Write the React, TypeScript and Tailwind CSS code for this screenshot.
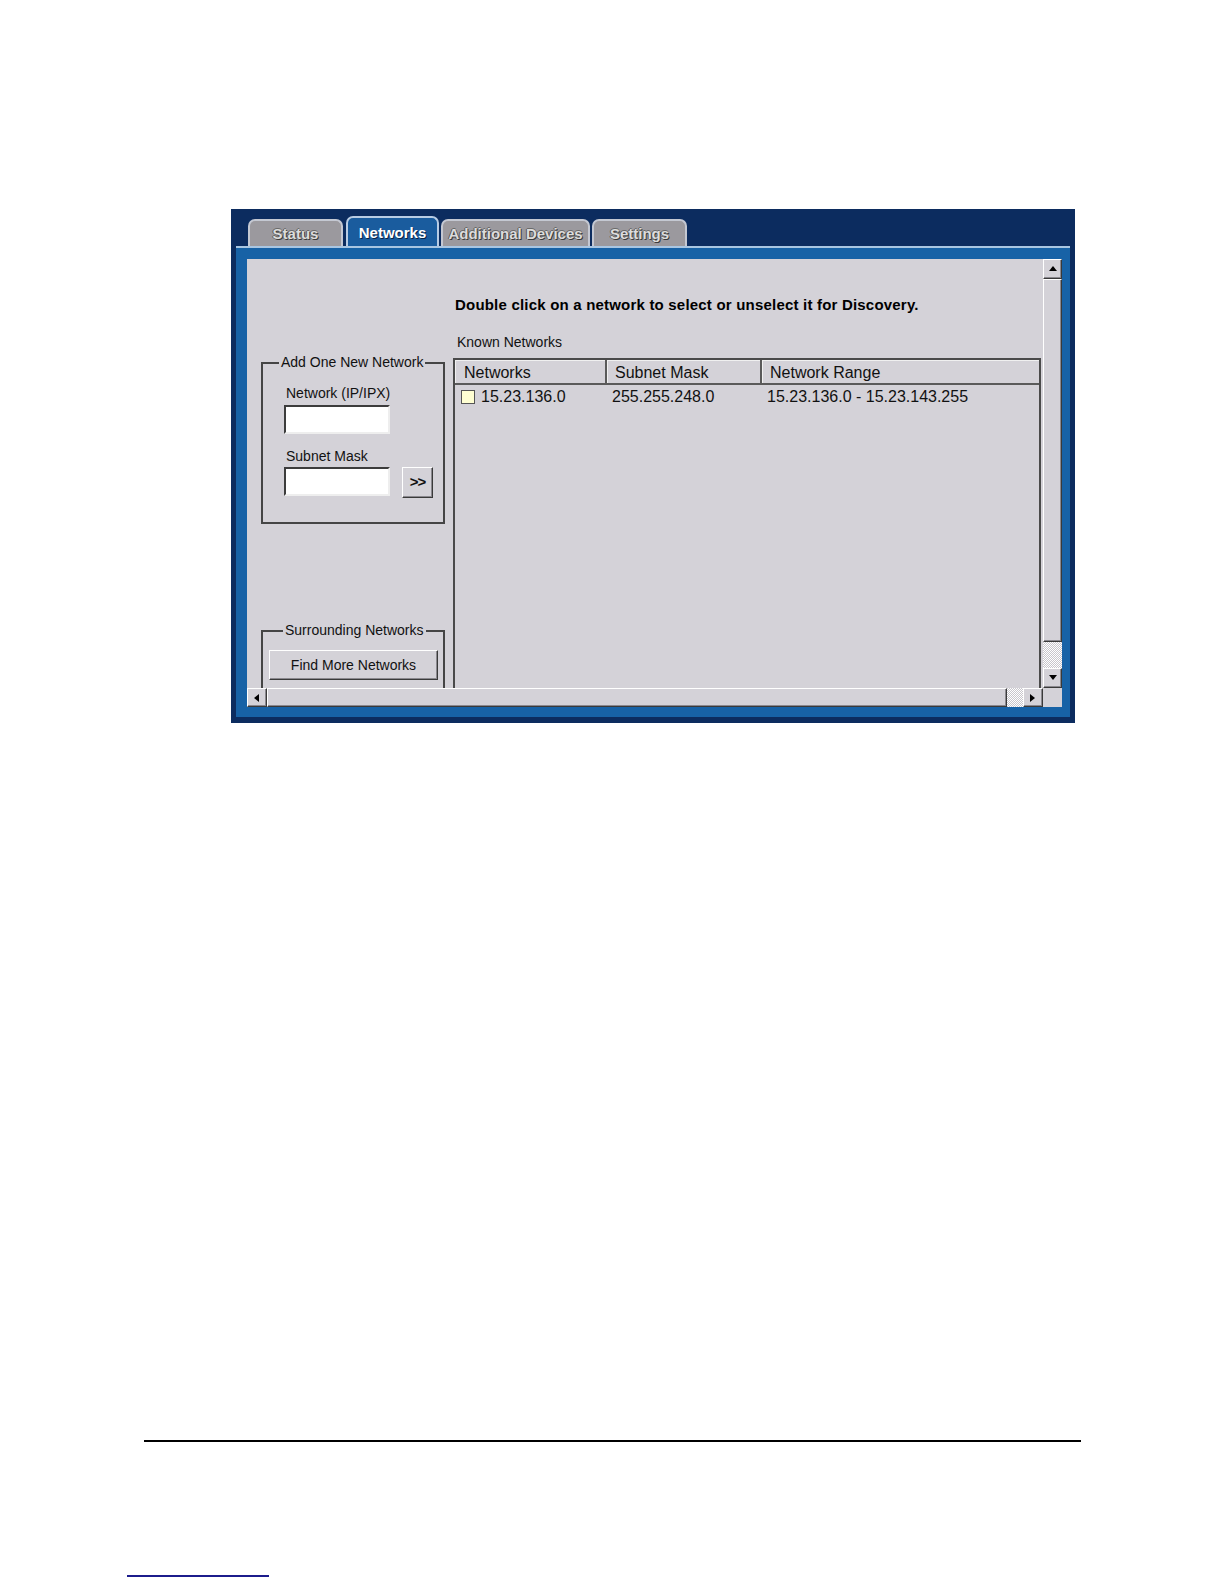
import React from "react";

const F = "font-['Liberation_Sans',Arial,sans-serif]";
const raised =
  "bg-[#d4d2d8] border border-t-white border-l-white border-b-[#3a3a3a] border-r-[#3a3a3a] shadow-[inset_-1px_-1px_0_#8a888e]";
const dither =
  "bg-[image:repeating-conic-gradient(#ffffff_0_25%,#c8c6cc_0_50%)] bg-[length:2px_2px]";

function Tri({ dir }: { dir: "up" | "down" | "left" | "right" }) {
  const pts = {
    up: "4,1 8,6 0,6",
    down: "0,1 8,1 4,6",
    left: "6,0 6,8 1,4",
    right: "1,0 1,8 6,4",
  }[dir];
  return (
    <svg width="8" height="8" viewBox="0 0 8 8">
      <polygon points={pts} fill="#000" />
    </svg>
  );
}

function Tab({ label, w, active, ml }: { label: string; w: string; active?: boolean; ml: string }) {
  if (active) {
    return (
      <div
        className={`${w} ${ml} h-[30px] pt-[2px] rounded-t-[7px] border-2 border-b-0 border-[#b8cce4] bg-[#1a5c9e] flex items-center justify-center text-[15px] font-bold text-white [text-shadow:1px_1px_0_#0a2244]`}
      >
        {label}
      </div>
    );
  }
  return (
    <div
      className={`${w} ${ml} h-[27px] pt-[2px] rounded-t-[7px] border-2 border-b-0 border-[#c4c8d2] bg-[#9b999e] flex items-center justify-center text-[15px] font-bold text-[#dcdcdc] [text-shadow:1px_1px_0_#3c3c3c,-1px_0_0_#5c5c5c,0_-1px_0_#6a6a6a]`}
    >
      {label}
    </div>
  );
}

export default function App() {
  return (
    <div className={`w-[1224px] h-[1584px] bg-white ${F} overflow-hidden`}>
      <div className="pt-[209px] pl-[231px]">
        {/* Frame */}
        <div className="w-[844px] h-[514px] bg-[#0c2c5f] flex flex-col">
          {/* tab strip */}
          <div className="h-[37px] flex items-end pl-[17px]">
            <Tab label="Status" w="w-[95px]" ml="ml-0" />
            <Tab label="Networks" w="w-[93px]" ml="ml-[3px]" active />
            <Tab label="Additional Devices" w="w-[149px]" ml="ml-[2px]" />
            <Tab label="Settings" w="w-[95px]" ml="ml-[2px]" />
          </div>
          {/* blue band */}
          <div className="mx-[5px] mb-[6px] flex-1 bg-[#1762a6] border-t-2 border-[#a9c6e2] pl-[11px] pr-[8px] pt-[11px] pb-[10px]">
            {/* gray content */}
            <div className="w-[815px] h-[448px] bg-[#d4d2d8] grid grid-cols-[796px_19px] grid-rows-[429px_19px] text-[#111]">
              {/* main */}
              <div className="overflow-hidden flex">
                {/* left column */}
                <div className="w-[206px] pl-[14px] pr-[8px] pt-[95px] flex flex-col">
                  <fieldset className="border-2 border-[#454545]">
                    <legend className="ml-[16px] px-[2px] text-[14px] leading-[17px] whitespace-nowrap">Add One New Network</legend>
                    <div className="pl-[21px] pb-[24px]">
                      <div className="mt-[14px] pl-[2px] text-[14px] leading-[17px]">Network (IP/IPX)</div>
                      <div className="mt-[3px] w-[106px] h-[29px] bg-white border-2 border-t-[#3c3c3c] border-l-[#3c3c3c] border-b-[#eeeeee] border-r-[#eeeeee]" />
                      <div className="mt-[14px] pl-[2px] text-[14px] leading-[17px]">Subnet Mask</div>
                      <div className="mt-[2px] flex items-start">
                        <div className="w-[106px] h-[29px] bg-white border-2 border-t-[#3c3c3c] border-l-[#3c3c3c] border-b-[#eeeeee] border-r-[#eeeeee]" />
                        <div className={`ml-[12px] w-[31px] h-[31px] ${raised} flex items-center justify-center text-[15px] font-bold tracking-[-1px]`}>
                          &gt;&gt;
                        </div>
                      </div>
                    </div>
                  </fieldset>
                  <fieldset className="mt-[98px] border-2 border-[#454545]">
                    <legend className="ml-[20px] px-[2px] text-[14px] leading-[17px] whitespace-nowrap">Surrounding Networks</legend>
                    <div className="pl-[6px] pb-[20px]">
                      <div className={`mt-[11px] w-[169px] h-[30px] ${raised} flex items-center justify-center text-[14px]`}>
                        Find More Networks
                      </div>
                    </div>
                  </fieldset>
                </div>
                {/* right column */}
                <div className="flex-1 flex flex-col pt-[37px]">
                  <div className="pl-[2px] text-[15px] leading-[18px] font-bold tracking-[0.2px] text-black">
                    Double click on a network to select or unselect it for Discovery.
                  </div>
                  <div className="mt-[19px] pl-[4px] text-[14px] leading-[18px]">Known Networks</div>
                  <div className="mt-[7px] w-[588px] flex-1 border-l-2 border-t-2 border-r-2 border-[#4a4a4a]">
                    <div className="flex h-[25px] border-b-2 border-[#5a5a5a] text-[16px] leading-[25px]">
                      <div className="w-[152px] pl-[9px] border-r-2 border-[#5a5a5a] shadow-[inset_1px_1px_0_#f0f0f0]">Networks</div>
                      <div className="w-[155px] pl-[8px] border-r-2 border-[#5a5a5a] shadow-[inset_1px_1px_0_#f0f0f0]">Subnet Mask</div>
                      <div className="flex-1 pl-[8px] shadow-[inset_1px_1px_0_#f0f0f0]">Network Range</div>
                    </div>
                    <div className="flex items-center h-[22px] mt-[1px] text-[16px] leading-[20px]">
                      <div className="w-[152px] flex items-center pl-[6px]">
                        <div className="w-[14px] h-[14px] bg-[#ffffd2] border border-[#555]" />
                        <span className="ml-[6px]">15.23.136.0</span>
                      </div>
                      <div className="w-[155px] pl-[5px]">255.255.248.0</div>
                      <div className="flex-1 pl-[5px]">15.23.136.0 - 15.23.143.255</div>
                    </div>
                  </div>
                </div>
              </div>
              {/* vertical scrollbar */}
              <div className="flex flex-col">
                <div className={`h-[20px] ${raised} flex items-center justify-center`}>
                  <Tri dir="up" />
                </div>
                <div className={`flex-1 ${raised}`} />
                <div className={`h-[26px] ${dither}`} />
                <div className={`h-[20px] ${raised} flex items-center justify-center`}>
                  <Tri dir="down" />
                </div>
              </div>
              {/* horizontal scrollbar */}
              <div className="flex">
                <div className={`w-[20px] ${raised} flex items-center justify-center`}>
                  <Tri dir="left" />
                </div>
                <div className={`flex-1 ${raised}`} />
                <div className={`w-[16px] ${dither}`} />
                <div className={`w-[20px] ${raised} flex items-center justify-center`}>
                  <Tri dir="right" />
                </div>
              </div>
              {/* corner */}
              <div className="bg-[#d4d2d8]" />
            </div>
          </div>
        </div>
      </div>
      {/* footer rule */}
      <div className="mt-[717px] ml-[144px] w-[937px] h-[2px] bg-black" />
      <div className="mt-[133px] ml-[127px] w-[142px] h-[2px] bg-[#1c1c8c]" />
    </div>
  );
}
